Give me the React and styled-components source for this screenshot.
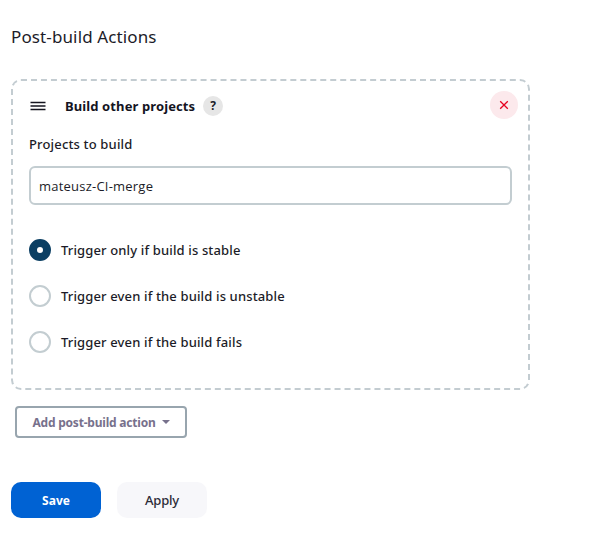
import React, { useState } from "react";
import styled, { createGlobalStyle } from "styled-components";

const GlobalStyle = createGlobalStyle`
  * { box-sizing: border-box; }
  body {
    margin: 0;
    background: #fff;
    color: #1c1c28;
    font-family: "Noto Sans", "Open Sans", sans-serif;
    font-size: 13px;
  }
  button, input { font: inherit; color: inherit; }
`;

const Page = styled.main`
  width: 599px;
  height: 542px;
  padding: 24px 0 0 11px;
  overflow: hidden;
`;

const Title = styled.h2`
  margin: 0 0 30px;
  font-size: 17px;
  font-weight: 400;
  line-height: 25px;
  letter-spacing: 0.12px;
`;

const Card = styled.section`
  width: 519px;
  height: 311px;
  padding: 10px 16px 0;
  border: 2px dashed #c3ccd1;
  border-radius: 10px;
`;

const CardHeader = styled.header`
  display: flex;
  align-items: center;
  height: 28px;
`;

const DragHandle = styled.svg`
  width: 18px;
  height: 12px;
  margin: 2px 18px 0 0;
`;

const CardTitle = styled.div`
  margin-top: 1px;
  color: #14141f;
  font-weight: 700;
  line-height: 20px;
  white-space: nowrap;
  letter-spacing: 0.11px;
`;

const RoundButton = styled.button`
  display: flex;
  align-items: center;
  justify-content: center;
  flex: none;
  padding: 0;
  border: 0;
  border-radius: 50%;
`;

const HelpButton = styled(RoundButton)`
  width: 20px;
  height: 20px;
  margin: 2px 0 0 8px;
  background: #e6e6e6;
  font-size: 12px;
  font-weight: 700;
  line-height: 20px;
`;

const DeleteButton = styled(RoundButton)`
  width: 28px;
  height: 28px;
  margin: 0 -6px 0 auto;
  background: #fce9ec;
`;

const Label = styled.label`
  display: block;
  margin: 15px 0 12px;
  font-weight: 500;
  line-height: 20px;
  letter-spacing: 0.16px;
`;

const TextInput = styled.input`
  display: block;
  width: 483px;
  height: 39px;
  padding: 1px 8px 0;
  border: 2px solid #c3cdd1;
  border-radius: 6px;
  background: #fff;
  outline: 0;
  font-family: "Open Sans", "Noto Sans", sans-serif;
  letter-spacing: 0.22px;
`;

const RadioGroup = styled.div`
  display: flex;
  flex-direction: column;
  gap: 24px;
  margin-top: 34px;
`;

const RadioRow = styled.label`
  display: flex;
  align-items: center;
  gap: 10px;
  height: 22px;
  font-weight: 500;
  line-height: 22px;
  white-space: nowrap;
  letter-spacing: 0.14px;
`;

const Radio = styled.input`
  appearance: none;
  width: 22px;
  height: 22px;
  margin: 0;
  border: 2px solid #c3cdd1;
  border-radius: 50%;
  background: #fff;
  &:checked { border: 8px solid #0b3f63; }
`;

const AddButton = styled.button`
  display: flex;
  align-items: center;
  justify-content: center;
  gap: 6px;
  width: 172px;
  height: 32px;
  margin: 16px 0 0 4px;
  padding: 0;
  border: 2px solid #98a5ae;
  border-radius: 4px;
  background: #fff;
  color: #77718c;
  font-size: 12px;
  font-weight: 700;
  white-space: nowrap;
  letter-spacing: -0.21px;
`;

const Footer = styled.footer`
  display: flex;
  gap: 16px;
  margin-top: 44px;
`;

const ActionButton = styled.button`
  width: 90px;
  height: 36px;
  padding: 0;
  border: 0;
  border-radius: 10px;
  background: ${(p) => (p.$primary ? "#0062d3" : "#f7f7fa")};
  color: ${(p) => (p.$primary ? "#fff" : "#2b2b37")};
  font-size: ${(p) => (p.$primary ? 12 : 13)}px;
  font-weight: ${(p) => (p.$primary ? 700 : 500)};
  letter-spacing: ${(p) => (p.$primary ? 0 : -0.2)}px;
`;

const OPTIONS = [
  "Trigger only if build is stable",
  "Trigger even if the build is unstable",
  "Trigger even if the build fails",
];

export default function App() {
  const [selected, setSelected] = useState(0);
  const [projects, setProjects] = useState("mateusz-CI-merge");
  return (
    <>
      <GlobalStyle />
      <Page>
        <Title>Post-build Actions</Title>
        <Card>
          <CardHeader>
            <DragHandle viewBox="0 0 18 12" stroke="#14141f" strokeWidth="1.3">
              <path d="M1.5 2.5h15M1.5 6h15M1.5 9.5h15" />
            </DragHandle>
            <CardTitle>Build other projects</CardTitle>
            <HelpButton type="button">?</HelpButton>
            <DeleteButton type="button" aria-label="Delete">
              <svg width="10" height="10" viewBox="0 0 10 10" stroke="#e6001f" strokeWidth="1.3">
                <path d="M1.2 1.2l7.6 7.6M8.8 1.2L1.2 8.8" />
              </svg>
            </DeleteButton>
          </CardHeader>
          <Label htmlFor="projects">Projects to build</Label>
          <TextInput
            id="projects"
            spellCheck={false}
            value={projects}
            onChange={(e) => setProjects(e.target.value)}
          />
          <RadioGroup>
            {OPTIONS.map((text, i) => (
              <RadioRow key={text}>
                <Radio type="radio" name="trigger" checked={selected === i} onChange={() => setSelected(i)} />
                <span>{text}</span>
              </RadioRow>
            ))}
          </RadioGroup>
        </Card>
        <AddButton type="button">
          <span>Add post-build action</span>
          <svg width="8" height="4" viewBox="0 0 8 4" fill="currentColor">
            <path d="M0 0h8L4 4z" />
          </svg>
        </AddButton>
        <Footer>
          <ActionButton type="button" $primary>Save</ActionButton>
          <ActionButton type="button">Apply</ActionButton>
        </Footer>
      </Page>
    </>
  );
}
